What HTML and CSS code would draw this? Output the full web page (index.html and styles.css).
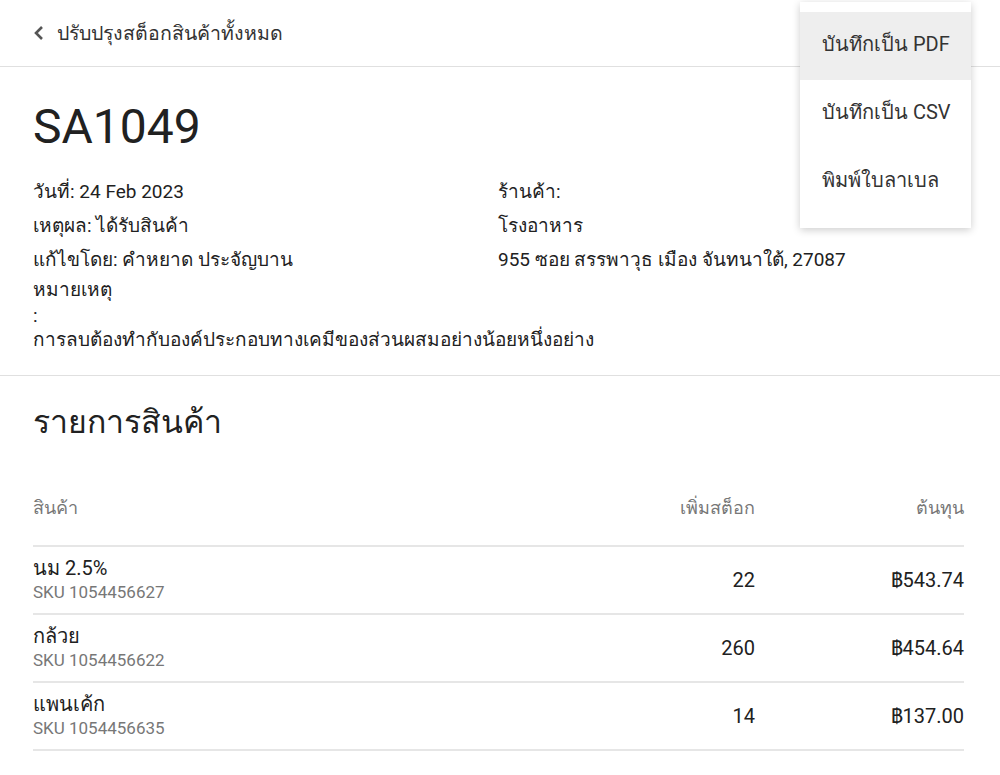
FILE: index.html
```html
<!DOCTYPE html>
<html lang="th">
<head>
	<meta charset="utf-8">
	<title>SA1049</title>
	<link rel="stylesheet" href="styles.css">
</head>
<body>
	<div class="topbar">
		<a class="back" href="#">
			<svg width="12" height="16" viewBox="0 0 12 16"><path d="M9 2 L3 8 L9 14" fill="none" stroke="#555" stroke-width="2.6"/></svg>
			<span>ปรับปรุงสต็อกสินค้าทั้งหมด</span>
		</a>
	</div>

	<ul class="menu">
		<li class="active">บันทึกเป็น PDF</li>
		<li>บันทึกเป็น CSV</li>
		<li>พิมพ์ใบลาเบล</li>
	</ul>

	<section class="summary">
		<h1>SA1049</h1>
		<div class="info">
			<div class="col">
				<div class="line">วันที่: 24 Feb 2023</div>
				<div class="line">เหตุผล: ได้รับสินค้า</div>
				<div class="line">แก้ไขโดย: คำหยาด ประจัญบาน</div>
			</div>
			<div class="col">
				<div class="line">ร้านค้า:</div>
				<div class="line">โรงอาหาร</div>
				<div class="line">955 ซอย สรรพาวุธ เมือง จันทนาใต้, 27087</div>
			</div>
		</div>
		<div class="note">
			<div class="note-label">หมายเหตุ</div>
			<div class="note-colon">:</div>
			<div class="note-text">การลบต้องทำกับองค์ประกอบทางเคมีของส่วนผสมอย่างน้อยหนึ่งอย่าง</div>
		</div>
	</section>

	<section class="items">
		<h2>รายการสินค้า</h2>
		<table>
			<thead>
				<tr>
					<th class="name">สินค้า</th>
					<th class="num">เพิ่มสต็อก</th>
					<th class="num">ต้นทุน</th>
				</tr>
			</thead>
			<tbody>
				<tr>
					<td class="name">นม 2.5%<div class="sku">SKU 1054456627</div></td>
					<td class="num">22</td>
					<td class="num">฿543.74</td>
				</tr>
				<tr>
					<td class="name">กล้วย<div class="sku">SKU 1054456622</div></td>
					<td class="num">260</td>
					<td class="num">฿454.64</td>
				</tr>
				<tr>
					<td class="name">แพนเค้ก<div class="sku">SKU 1054456635</div></td>
					<td class="num">14</td>
					<td class="num">฿137.00</td>
				</tr>
			</tbody>
		</table>
	</section>
</body>
</html>
```

FILE: styles.css
```css
body {
	margin: 0;
	font-family: Roboto, "Noto Sans", sans-serif;
	color: #212121;
	background: #fff;
}

.topbar {
	height: 66px;
	border-bottom: 1px solid #e0e0e0;
	display: flex;
	align-items: center;
	padding-left: 33px;
}

.back {
	display: flex;
	align-items: center;
	gap: 12px;
	color: #333;
	text-decoration: none;
	font-size: 19.5px;
}

.menu {
	position: absolute;
	top: 2px;
	left: 800px;
	width: 171px;
	margin: 0;
	padding: 10px 0 12px;
	list-style: none;
	background: #fff;
	box-shadow: 0 2px 8px rgba(0, 0, 0, 0.2);
}

.menu li {
	height: 68px;
	display: flex;
	align-items: center;
	padding: 0 0 4px 22px;
	box-sizing: border-box;
	font-size: 20px;
	color: #333;
}

.menu li.active {
	background: #eee;
}

.summary {
	padding: 30px 33px 24px;
	border-bottom: 1px solid #e0e0e0;
}

h1 {
	margin: 0 0 18px;
	font-size: 48px;
	font-weight: 400;
	line-height: 60px;
}

.info {
	display: grid;
	grid-template-columns: 465px 1fr;
	font-size: 19px;
}

.line {
	line-height: 34px;
}

.note {
	font-size: 19px;
}

.note-label {
	line-height: 26px;
}

.note-colon {
	line-height: 26px;
}

.note-text {
	line-height: 22px;
}

.items {
	padding: 22px 36px 0 33px;
}

h2 {
	margin: 0 0 50px;
	font-size: 32px;
	font-weight: 400;
	line-height: 48px;
}

table {
	width: 100%;
	border-collapse: collapse;
}

th {
	font-size: 18px;
	font-weight: 400;
	color: #777;
	line-height: 24px;
	padding: 0 0 25px;
	vertical-align: top;
	text-align: left;
}

th.num,
td.num {
	text-align: right;
}

th.num:last-child,
td.num:last-child {
	width: 209px;
}

tbody tr {
	border-top: 2px solid #e6e6e6;
}

tbody tr:last-child {
	border-bottom: 2px solid #e6e6e6;
}

thead tr {
	border-bottom: 2px solid #e6e6e6;
}

td {
	height: 66px;
	font-size: 20px;
	padding: 0;
	vertical-align: middle;
}

td.name {
	line-height: 24px;
}

.sku {
	font-size: 17px;
	color: #777;
	line-height: 24px;
}
```
